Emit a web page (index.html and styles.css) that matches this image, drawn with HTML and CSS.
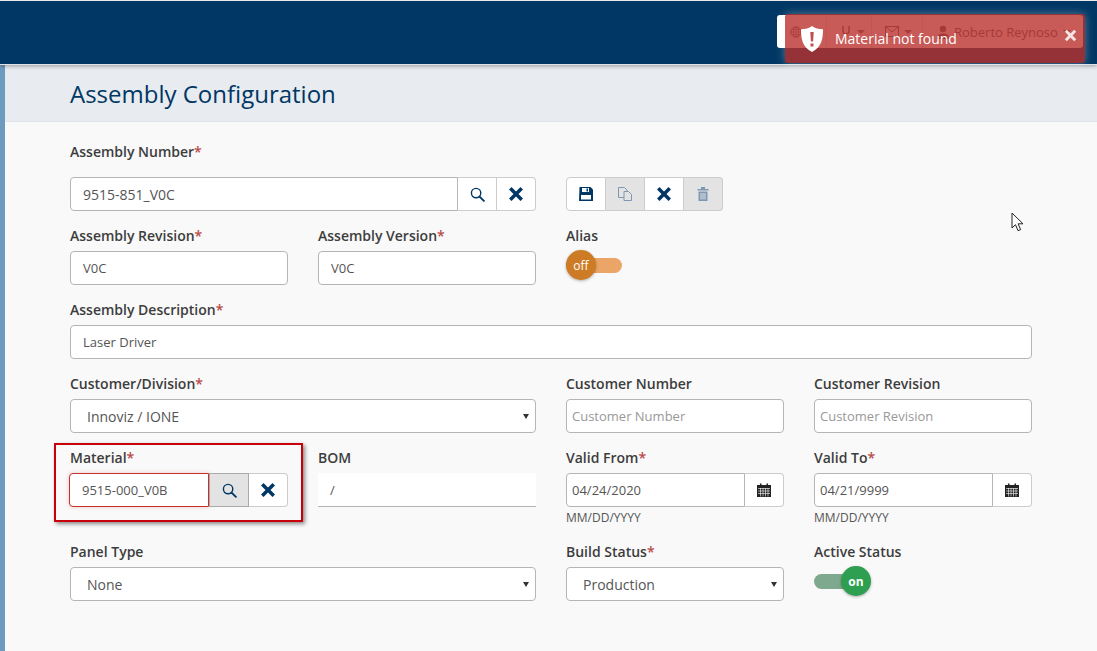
FILE: index.html
```html
<!DOCTYPE html>
<html lang="en">
<head>
    <meta charset="UTF-8">
    <title>Assembly Configuration</title>
    <link rel="stylesheet" href="styles.css">
</head>
<body>
    <svg class="defs" width="0" height="0">
        <symbol id="i-search" viewBox="0 0 16 16"><circle cx="6.500" cy="6.500" r="5" fill="none" stroke="currentColor" stroke-width="1.500"/><path d="M10.200 10.200l4.600 4.600" stroke="currentColor" stroke-width="2" stroke-linecap="round"/></symbol>
        <symbol id="i-x" viewBox="0 0 16 16"><path d="M1 3.500L3.500 1 8 5.500 12.500 1 15 3.500 10.500 8 15 12.500 12.500 15 8 10.500 3.500 15 1 12.500 5.500 8z" fill="currentColor"/></symbol>
        <symbol id="i-save" viewBox="0 0 16 16"><path d="M1.500 1h11L15 3.500V15H1z" fill="currentColor"/><rect x="3" y="9" width="10" height="4.500" fill="#fff"/><rect x="4" y="2" width="7" height="4" fill="#fff"/><rect x="8.500" y="2.500" width="1.500" height="3" fill="currentColor"/></symbol>
        <symbol id="i-copy" viewBox="0 0 16 16"><path d="M1.500 1.500h6l2.500 2.500v7.500H1.500z" fill="#e3e3e3" stroke="currentColor"/><path d="M7 5.500h4.500l3 3v6H7z" fill="#e3e3e3" stroke="currentColor"/></symbol>
        <symbol id="i-trash" viewBox="0 0 16 16"><path d="M2.500 3h11v1.500h-11zM6 1h4v2H6z" fill="currentColor"/><path d="M3.500 5.500h9V15h-9z" fill="currentColor"/><path d="M6 7v6.500M8 7v6.500M10 7v6.500" stroke="#e3e3e3"/></symbol>
        <symbol id="i-cal" viewBox="0 0 14 14"><path d="M0 2h14v12H0z" fill="currentColor"/><path d="M1 5.500h12M1 8h12M1 10.500h12M3.500 5v8.500M6 5v8.500M8.500 5v8.500M11 5v8.500" stroke="#fff" stroke-width=".6"/><path d="M3 .5h1.500V3H3zM9.500 .5H11V3H9.500z" fill="currentColor"/></symbol>
        <symbol id="i-shield" viewBox="0 0 22 26"><path d="M11 0c3 2.200 6.500 3.200 11 3.200 0 10-1.500 18-11 22.800C1.500 21.200 0 13.200 0 3.200 4.500 3.200 8 2.200 11 0z" fill="#fff"/><path d="M9.300 6h3.400l-.6 9.500h-2.200zM9.500 17.500h3v3h-3z" fill="#c0504d"/></symbol>
    </svg>

    <header class="topbar">
        <nav class="usernav">
            <span class="navitem nav-globe">
                <svg class="navicon" viewBox="0 0 14 14"><circle cx="7" cy="7" r="6" fill="none" stroke="currentColor"/><path d="M1 7h12M7 1v12M2 4h10M2 10h10" stroke="currentColor" stroke-width=".7"/><ellipse cx="7" cy="7" rx="3" ry="6" fill="none" stroke="currentColor" stroke-width=".7"/></svg>
            </span>
            <span class="navitem nav-steth">
                <svg class="navicon" viewBox="0 0 10 14"><path d="M2 1v5a3 3 0 0 0 6 0V1M5 9v4" fill="none" stroke="currentColor" stroke-width="1.400"/></svg>
                <i class="caret"></i>
            </span>
            <span class="navitem nav-mail">
                <svg class="navicon mail" viewBox="0 0 14 11"><rect x=".5" y=".5" width="13" height="10" fill="none" stroke="currentColor"/><path d="M1 1l6 5 6-5" fill="none" stroke="currentColor"/></svg>
                <i class="caret"></i>
            </span>
            <span class="navitem nav-user">
                <svg class="navicon user" viewBox="0 0 12 14"><circle cx="6" cy="4" r="3.200" fill="currentColor"/><path d="M0 14c0-4 2-5.500 6-5.500s6 1.500 6 5.500z" fill="currentColor"/></svg>
                Roberto Reynoso
                <i class="caret"></i>
            </span>
        </nav>
    </header>

    <div class="toast">
        <svg class="toast-icon"><use href="#i-shield"/></svg>
        <span class="toast-text">Material not found</span>
        <svg class="toast-close"><use href="#i-x"/></svg>
    </div>

    <div class="page">
        <aside class="rail"></aside>
        <main class="content">
            <h1 class="title">Assembly Configuration</h1>

            <form class="form">
                <div class="field span2 first">
                    <label>Assembly Number<em>*</em></label>
                    <div class="group">
                        <input class="input big" type="text" value="9515-851_V0C">
                        <button type="button" class="btn"><svg class="ico find"><use href="#i-search"/></svg></button>
                        <button type="button" class="btn"><svg class="ico"><use href="#i-x"/></svg></button>
                    </div>
                </div>
                <div class="field span2 first">
                    <label>&nbsp;</label>
                    <div class="actions">
                        <button type="button" class="btn"><svg class="ico"><use href="#i-save"/></svg></button>
                        <button type="button" class="btn off"><svg class="ico"><use href="#i-copy"/></svg></button>
                        <button type="button" class="btn"><svg class="ico"><use href="#i-x"/></svg></button>
                        <button type="button" class="btn off"><svg class="ico"><use href="#i-trash"/></svg></button>
                    </div>
                </div>

                <div class="field">
                    <label>Assembly Revision<em>*</em></label>
                    <input class="input" type="text" value="V0C">
                </div>
                <div class="field">
                    <label>Assembly Version<em>*</em></label>
                    <input class="input" type="text" value="V0C">
                </div>
                <div class="field span2">
                    <label>Alias</label>
                    <div class="toggle is-off"><span class="track"></span><span class="knob">off</span></div>
                </div>

                <div class="field span4">
                    <label>Assembly Description<em>*</em></label>
                    <input class="input" type="text" value="Laser Driver">
                </div>

                <div class="field span2">
                    <label>Customer/Division<em>*</em></label>
                    <div class="select"><select><option>Innoviz / IONE</option></select></div>
                </div>
                <div class="field">
                    <label>Customer Number</label>
                    <input class="input ph" type="text" placeholder="Customer Number">
                </div>
                <div class="field">
                    <label>Customer Revision</label>
                    <input class="input ph" type="text" placeholder="Customer Revision">
                </div>

                <div class="field">
                    <label>Material<em>*</em></label>
                    <div class="group">
                        <input class="input invalid" type="text" value="9515-000_V0B">
                        <button type="button" class="btn off"><svg class="ico find"><use href="#i-search"/></svg></button>
                        <button type="button" class="btn"><svg class="ico"><use href="#i-x"/></svg></button>
                    </div>
                    <span class="callout"></span>
                </div>
                <div class="field">
                    <label>BOM</label>
                    <input class="input bare" type="text" value="/">
                </div>
                <div class="field">
                    <label>Valid From<em>*</em></label>
                    <div class="group">
                        <input class="input date" type="text" value="04/24/2020">
                        <button type="button" class="btn"><svg class="ico cal"><use href="#i-cal"/></svg></button>
                    </div>
                    <small class="hint">MM/DD/YYYY</small>
                </div>
                <div class="field">
                    <label>Valid To<em>*</em></label>
                    <div class="group">
                        <input class="input date" type="text" value="04/21/9999">
                        <button type="button" class="btn"><svg class="ico cal"><use href="#i-cal"/></svg></button>
                    </div>
                    <small class="hint">MM/DD/YYYY</small>
                </div>

                <div class="field span2">
                    <label>Panel Type</label>
                    <div class="select"><select><option>None</option></select></div>
                </div>
                <div class="field">
                    <label>Build Status<em>*</em></label>
                    <div class="select"><select><option>Production</option></select></div>
                </div>
                <div class="field">
                    <label>Active Status</label>
                    <div class="toggle is-on"><span class="track"></span><span class="knob">on</span></div>
                </div>
            </form>
        </main>
    </div>

    <svg class="pointer" viewBox="0 0 13 20"><path d="M1 1v15l3.500-3.300 2.500 6 2.600-1.100-2.500-5.800h4.900z" fill="#fff" stroke="#222"/></svg>
</body>
</html>
```

FILE: styles.css
```css
* {
    box-sizing: border-box;
}
html, body {
    height: 100%;
}
body {
    margin: 0;
    font-family: "Open Sans", sans-serif;
    font-size: 14px;
    color: #333;
    background-color: #f9f9f9;
    overflow: hidden;
}
.defs {
    position: absolute;
}

/* top bar */
.topbar {
    height: 65px;
    padding: 15px 14px 0 0;
    display: flex;
    justify-content: flex-end;
    align-items: flex-start;
    background-color: #003764;
    border-top: 1px solid #e6ebf0;
    border-bottom: 1px solid #dfe4ea;
    position: relative;
    z-index: 2;
    box-shadow: 0 1px 4px rgba(0, 0, 0, 0.35);
}
.usernav {
    display: flex;
    width: 306px;
    height: 33px;
    background: #fff;
    border-radius: 3px;
    color: #555;
    margin-top: -1px;
}
.navitem {
    display: flex;
    align-items: center;
    gap: 5px;
    padding: 0 0 0 13px;
    border-right: 1px solid #ddd;
    white-space: nowrap;
    font-size: 13px;
    color: #555;
}
.nav-globe { width: 50px; }
.nav-steth { width: 45px; }
.nav-mail { width: 51px; }
.nav-user { flex: 1; border-right: 0; padding-left: 14px; }
.navicon {
    width: 12px;
    height: 14px;
    flex: none;
}
.navicon.mail { width: 14px; height: 11px; }
.caret {
    width: 0;
    height: 0;
    border: 4px solid transparent;
    border-top-color: #666;
    border-bottom: 0;
}

/* toast over the top bar */
.toast {
    position: absolute;
    z-index: 5;
    left: 785px;
    top: 14px;
    width: 300px;
    height: 49px;
    display: flex;
    align-items: center;
    padding: 0 8px 1px 16px;
    background: rgba(186, 49, 45, 0.8);
    border-radius: 3px;
    box-shadow: 0 0 10px rgba(255, 255, 255, 0.35);
    color: #fff;
}
.toast-icon {
    width: 22px;
    height: 26px;
    flex: none;
    margin-top: 1px;
}
.toast-text {
    margin-left: 12px;
    flex: 1;
    font-size: 14px;
}
.toast-close {
    width: 13px;
    height: 13px;
    color: #f3e6e5;
    margin-bottom: 6px;
}

/* page */
.page {
    display: flex;
    height: calc(100% - 65px);
}
.rail {
    width: 5px;
    flex: none;
    background-color: #6d9abf;
}
.content {
    flex: 1;
    min-width: 0;
}
.title {
    margin: 0;
    height: 57px;
    padding: 0 65px;
    display: flex;
    align-items: center;
    font-size: 24px;
    font-weight: 400;
    color: #003764;
    background-color: #e8ebef;
    border-bottom: 1px solid #e1e4e8;
}
.form {
    display: grid;
    grid-template-columns: repeat(4, 218px);
    column-gap: 30px;
    row-gap: 14px;
    padding: 19px 0 0 65px;
}
.field {
    position: relative;
    min-width: 0;
}
.span2 { grid-column: span 2; }
.span4 { grid-column: span 4; }
.field label {
    display: block;
    height: 20px;
    line-height: 20px;
    margin: 1px 0 5px;
    font-weight: 600;
    font-size: 14px;
    color: #3d3d3d;
}
.field.first label {
    margin-bottom: 15px;
}
.field em {
    font-style: normal;
    color: #b94a48;
}
.hint {
    display: block;
    height: 20px;
    line-height: 22px;
    font-size: 12px;
    color: #555;
}

/* inputs */
.input {
    display: block;
    width: 100%;
    height: 34px;
    padding: 0 12px;
    font: 13px "Open Sans", sans-serif;
    color: #555;
    background: #fff;
    border: 1px solid #b5b5b5;
    border-radius: 4px;
    outline: none;
}
.input.big {
    font-size: 14px;
}
.input::placeholder {
    color: #999;
}
.input.ph {
    padding: 0 5px;
}
.input.date {
    padding: 0 5px;
}
.input.invalid {
    margin-left: -1px;
    border-color: #c9302c;
    box-shadow: 0 0 4px rgba(201, 48, 44, 0.25);
}
.input.bare {
    border: 0;
    border-bottom: 1px solid #b5b5b5;
    border-radius: 0;
}
.group {
    display: flex;
}
.group .input {
    flex: 1;
    min-width: 0;
    border-radius: 4px 0 0 4px;
}
.btn {
    width: 39px;
    height: 34px;
    flex: none;
    display: flex;
    align-items: center;
    justify-content: center;
    padding: 0;
    color: #003764;
    background: #fff;
    border: 1px solid #ccc;
    border-left: 0;
}
.btn:last-child {
    border-radius: 0 4px 4px 0;
}
.btn.off {
    background-color: #e3e3e3;
}
.btn.off .ico {
    color: #7e97b3;
}
.group .btn.off {
    width: 40px;
    border-left: 1px solid #999;
    border-color: #aaa;
}
.group .btn.off .ico {
    color: #003764;
}
.ico {
    width: 16px;
    height: 16px;
}
.ico.find {
    width: 15px;
    height: 15px;
}
.ico.cal {
    width: 14px;
    height: 14px;
    color: #222;
}
.actions {
    display: flex;
    width: 157px;
}
.actions .btn:first-child {
    border-left: 1px solid #ccc;
    border-radius: 4px 0 0 4px;
    width: 40px;
}

/* select */
.select {
    position: relative;
}
.select select {
    display: block;
    width: 100%;
    height: 34px;
    padding: 0 16px;
    font: 14px "Open Sans", sans-serif;
    color: #555;
    background: #fff;
    border: 1px solid #b5b5b5;
    border-radius: 4px;
    appearance: none;
    outline: none;
}
.select::after {
    content: "";
    position: absolute;
    right: 7px;
    top: 15px;
    border: 3px solid transparent;
    border-top: 5px solid #333;
    border-bottom: 0;
}

/* toggles */
.toggle {
    position: relative;
    width: 58px;
    height: 30px;
    margin-top: -1px;
}
.toggle .track {
    position: absolute;
    left: 0;
    top: 8px;
    height: 15px;
    border-radius: 8px;
}
.toggle .knob {
    position: absolute;
    top: 0;
    width: 30px;
    height: 30px;
    border-radius: 50%;
    display: flex;
    align-items: center;
    justify-content: center;
    font-size: 12px;
    color: #fff;
    box-shadow: 0 1px 3px rgba(0, 0, 0, 0.3);
}
.is-off .track {
    width: 56px;
    background-color: #eba566;
}
.is-off .knob {
    left: 0;
    background-color: #cd7b25;
}
.is-on .track {
    width: 40px;
    background-color: #7fa98f;
}
.is-on .knob {
    left: 27px;
    font-weight: 700;
    background-color: #2e9e50;
}

/* annotation drawn on the screenshot */
.callout {
    position: absolute;
    left: -16px;
    top: -4px;
    width: 249px;
    height: 79px;
    border: 2px solid #c8000a;
    box-shadow: 2px 2px 4px rgba(0, 0, 0, 0.45);
    pointer-events: none;
}
.pointer {
    position: absolute;
    left: 1011px;
    top: 212px;
    width: 13px;
    height: 20px;
}
```
